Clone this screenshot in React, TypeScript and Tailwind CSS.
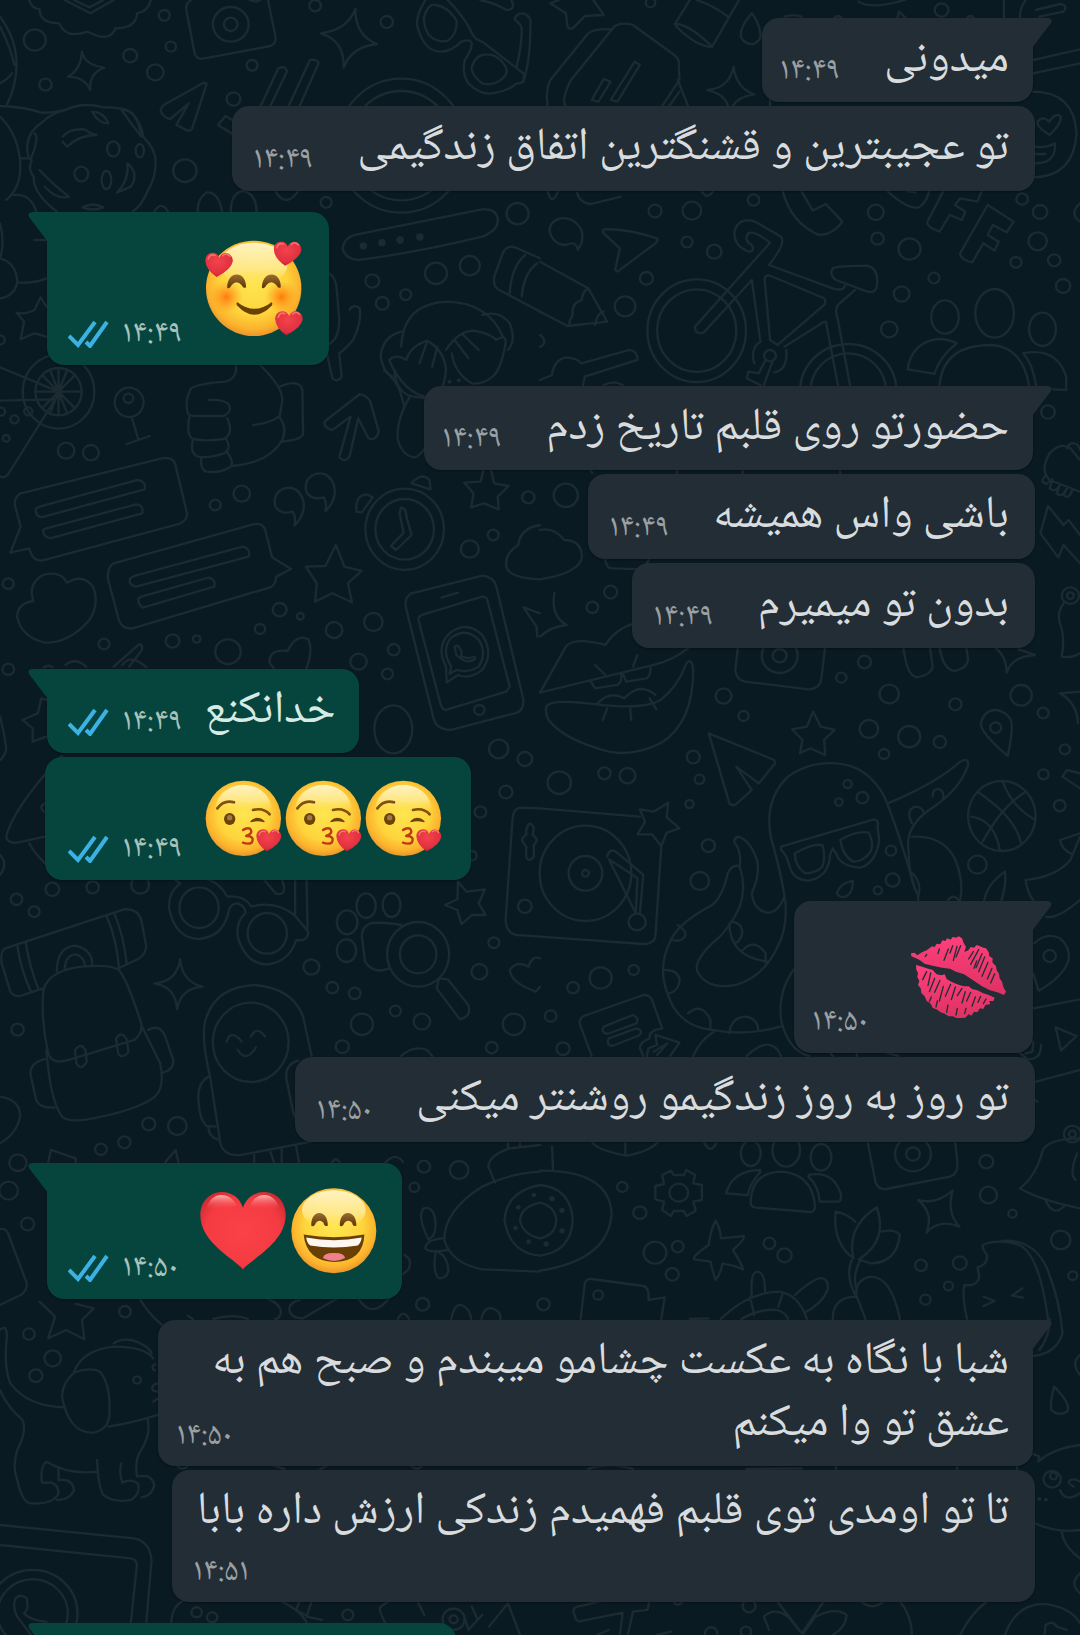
import type { ReactNode } from 'react';
import clsx from 'clsx';

type Circle = [number, number, number];

type Panel = {
  x: number;
  y: number;
  lines: string[];
  circles: Circle[];
  ovals?: [number, number, number, number][];
  dots?: Circle[];
};

type Message = {
  id: number;
  mine: boolean;
  tail: boolean;
  time: string;
  text?: string;
  emoji?: ReactNode;
  emojiClass?: string;
  meta?: 'inline' | 'over' | 'below';
};

// wallpaper drawings, one group per tile
const PANELS: Panel[] = [
  {
    x: 0,
    y: 0,
    lines: [
      'M238 155Q245 195 303 203Q258 220 262 270Q245 230 197 230Q235 210 238 155Z',
      'M1032 26Q1030 105 1095 132Q1020 140 998 203Q1000 120 931 100Q1010 90 1032 26Z',
      'M85 0Q90 25 115 28Q115 70 172 70Q190 118 255 95Q320 130 335 85Q395 85 398 40Q430 35 438 0M188 0L262 40L330 0M215 0L260 22L300 0',
      'M555 0Q538 10 541 30L565 160Q570 178 590 176L785 138Q803 130 800 110L778 0M725 0L745 5L755 0',
      'M0 50Q85 170 20 315M0 80Q30 140 42 195M0 250Q20 240 35 220',
      'M190 330Q240 305 300 322Q350 320 385 340Q415 380 415 410Q455 450 452 490Q450 540 430 570Q410 620 385 635M165 635Q95 580 98 530Q80 510 92 480Q75 470 80 430Q85 390 125 365Q150 340 190 330',
      'M182 410Q200 385 245 388Q260 400 280 405Q230 405 195 440L182 425M268 335Q300 335 315 370Q285 370 268 335M350 325Q400 330 410 410Q380 370 350 325M115 510Q150 550 200 590Q165 600 130 560M370 490Q405 520 380 560L340 578Q375 540 370 490M240 622Q270 605 300 622Q270 635 240 622M100 400Q115 410 92 470',
      'M0 318Q70 320 120 338Q150 340 190 330M0 350Q50 400 58 480Q65 560 18 600M40 585Q90 580 105 635M60 475H90',
      'M600 252Q595 245 585 252L475 315Q462 330 470 340Q480 355 495 357L548 310L512 375L545 392Q555 393 558 385Z',
      'M757 318L808 205Q830 195 833 215L785 318M838 318L900 180Q925 178 925 190L870 318M675 360L655 348L633 375L675 402',
      'M1235 0Q1200 60 1215 90Q1235 155 1280 155Q1310 155 1340 125Q1365 115 1370 130Q1370 150 1350 180Q1340 220 1360 250Q1400 290 1440 278Q1480 270 1500 250Q1525 255 1520 220L1400 125Q1380 120 1370 100Q1355 60 1300 0',
      'M1265 15Q1300 20 1325 60Q1330 100 1300 122Q1270 130 1245 105Q1220 60 1240 30Q1250 10 1265 15M1400 165Q1440 155 1465 195Q1480 215 1460 235Q1430 260 1400 250Q1365 220 1370 200Q1380 170 1400 165',
      'M1395 0Q1440 10 1470 30Q1490 30 1490 15L1485 0M1495 60Q1495 40 1520 40Q1545 50 1540 75Q1540 180 1520 245M1495 60Q1512 70 1515 85Q1515 140 1500 200',
      'M1030 705L1400 628Q1440 625 1445 655Q1450 690 1400 710Q1200 760 1040 780Q1000 775 995 745Q998 715 1030 705',
      'M575 635Q570 600 600 577Q635 575 645 635M670 635Q670 580 705 573Q745 580 745 635M800 575Q830 625 865 575M448 635Q468 600 488 635',
      'M1568 775L1495 742Q1470 735 1460 760L1435 830Q1430 860 1450 870L1568 935M1525 765Q1485 800 1480 880M1560 790Q1520 820 1515 890',
      'M0 670Q15 730 0 775Q50 790 50 850Q40 890 0 895M55 848Q100 850 135 835M135 920L118 892L100 930Q70 945 48 938L70 965L60 1018L100 1000L135 1010M100 720H135',
      'M955 820Q975 830 978 870L985 960Q985 1020 950 1035M1015 930Q1025 910 1045 925Q1050 970 1025 1020Q1000 1050 985 1060L992 1130Q980 1150 965 1135L950 1065',
      'M1165 1040Q1170 910 1300 905Q1420 910 1460 1010M1400 945Q1450 930 1480 970Q1500 1020 1475 1050M1165 995Q1110 1010 1105 1070Q1115 1120 1140 1130',
      'M1130 1080Q1150 1060 1180 1080Q1190 1040 1240 1022Q1290 1050 1295 1110Q1290 1180 1250 1195Q1170 1180 1130 1080M1295 1050Q1340 980 1390 995Q1430 1005 1440 1020Q1470 1000 1468 1030Q1455 1110 1430 1130Q1400 1155 1370 1150Q1320 1120 1312 1060M1240 1025L1218 1090M1270 1040L1255 1100M1320 1020L1360 1075M1345 1005L1390 1050'
    ],
    circles: [
      [101, 120, 32], [477, 46, 16], [378, 167, 20], [496, 140, 15], [451, 217, 24], [132, 254, 18], [732, 196, 16],
      [678, 297, 20], [915, 17, 17], [1123, 66, 18], [537, 512, 34], [947, 607, 16], [1503, 641, 32], [1266, 820, 32],
      [1364, 797, 29], [1081, 843, 20], [1110, 910, 19], [1178, 884, 16], [670, 73, 52], [670, 73, 20], [0, 1020, 14]
    ],
    ovals: [[1165, 437, 187, 201], [1165, 437, 152, 164], [329, 447, 18, 23], [406, 452, 12, 20], [236, 522, 20, 22], [309, 540, 14, 27]],
    dots: [[1055, 738, 11], [1109, 728, 11], [1162, 720, 11], [1219, 711, 11], [1305, 1145, 6], [1332, 1141, 6]]
  },
  {
    x: 540,
    y: 0,
    lines: [
      'M55 0L30 10L75 40L80 80Q90 92 98 82L130 48L185 45L155 0',
      'M435 0L392 72Q400 90 450 125Q490 145 500 140L578 0M392 72Q430 70 500 140M455 0Q510 20 545 50',
      'M615 40Q580 80 583 110Q595 135 620 132Q645 120 640 100Q635 65 615 40',
      'M75 318Q60 300 90 240L215 80Q235 65 270 75L390 165Q408 180 403 200L405 240L355 318M205 88Q160 85 140 100L30 240Q15 270 22 318M400 240L430 318M405 275L375 318M290 195L225 305L205 300L275 185ZM205 245L170 305L150 300L185 237Z',
      'M560 318Q575 290 622 283Q570 265 562 200Q550 265 485 270Q540 285 545 318M668 280V318',
      'M925 5Q960 30 1060 0M1347 0V54M1410 0Q1390 30 1395 54M1450 50L1520 35Q1535 15 1510 12L1440 30M1432 180L1568 148M1432 220L1568 190M710 50Q735 42 760 50M1038 54L1042 35L1062 54M1240 54Q1250 42 1260 54M855 54Q865 42 875 54',
      'M1432 275Q1550 275 1558 400Q1550 530 1432 532M1480 405Q1440 380 1445 365Q1460 345 1478 365Q1500 335 1512 350Q1515 370 1480 405M1437 440Q1470 445 1495 430Q1500 490 1437 490M1437 462H1468',
      'M705 575Q730 670 810 705Q850 705 878 665L830 612L792 632L760 575',
      'M1170 575L1125 665Q1120 680 1160 695L1190 645L1225 660L1235 635L1205 615L1220 595L1270 605L1282 575M1300 615L1220 760Q1220 780 1255 787L1287 730L1320 752L1332 725L1300 705L1315 675L1355 697L1375 665ZM1010 575Q1070 630 1100 622Q1120 610 1130 575M1065 573L1090 577',
      'M110 750Q130 720 120 690Q100 650 60 655Q25 665 28 695Q40 735 75 735Q105 720 110 750',
      'M185 688Q250 685 340 715Q345 722 335 730L225 815L218 810L232 745L182 697Z',
      'M0 785L140 865L195 965L80 978L0 935M140 865Q120 880 122 900Q90 910 95 945Q85 960 85 975M160 975Q165 940 185 935',
      'M668 728Q620 690 605 700Q590 720 615 735Q625 755 605 755Q560 735 565 695Q575 650 625 665L700 710Q715 730 665 795L850 865Q880 875 885 858M668 728L450 980Q450 1005 475 998L615 840L640 1025M652 835Q655 822 670 828L825 895Q832 905 825 915L690 1035L668 1020Z',
      'M850 805Q870 797 950 797Q985 805 978 860Q975 880 950 875L860 840Q838 825 850 805M915 870L865 915Q855 930 865 960L900 1155M830 965L865 1155M830 965Q820 965 810 975L710 1040M640 1025Q610 1045 622 1090M655 1080L635 1120L605 1115L600 1135L640 1155M675 1085L650 1155M715 1050Q720 1110 680 1117',
      'M1160 1155Q1170 1035 1310 1035Q1400 1040 1420 1155M1210 1030Q1150 1000 1100 1040Q1070 1070 1068 1108L1145 1122Q1160 1070 1210 1030M1403 1060Q1500 1040 1528 1130V1170L1490 1168M1403 1060Q1430 1090 1440 1155',
      'M35 1125Q40 1080 75 1072Q110 1075 120 1090L260 1050Q285 1055 283 1080L130 1130L125 1155M0 1140L35 1125M185 1155Q215 1140 240 1155M0 1005Q15 1015 12 1030Q5 1040 0 1040',
      'M108 578Q115 610 150 612L235 590M22 575Q35 620 52 575M470 575Q485 600 502 575M1568 610Q1535 640 1568 665'
    ],
    circles: [
      [321, 8, 14], [1166, 30, 20], [334, 633, 19], [441, 632, 27], [620, 600, 17], [427, 726, 16], [506, 755, 21],
      [309, 835, 19], [247, 919, 30], [975, 637, 23], [980, 716, 18], [1073, 747, 32], [1400, 597, 17], [1452, 636, 21],
      [1445, 724, 27], [1382, 787, 16], [1493, 781, 18], [1519, 858, 21], [1144, 834, 16], [1050, 882, 23],
      [1014, 988, 24], [668, 1067, 17]
    ],
    ovals: [[455, 992, 143, 154], [455, 992, 115, 124], [895, 1175, 140, 143], [895, 1175, 110, 115], [1176, 951, 40, 50], [1320, 940, 56, 73], [1459, 988, 39, 50]]
  },
  {
    x: 0,
    y: 370,
    lines: [
      'M0 -8L170 65M0 92L160 88L22 315Q12 325 0 320M170 -3V133M102 65H238M122 15L218 115M218 15L122 115M145 0L195 130M195 0L145 130',
      'M382 140L402 210M368 222L435 198M685 -15Q690 25 655 35Q580 40 555 55Q535 90 545 130Q550 140 580 138L650 138Q675 125 665 105Q655 88 605 90',
      'M550 140Q540 195 560 207Q600 215 650 207Q680 190 660 145M560 210Q550 250 575 260Q610 265 650 250Q675 235 655 205M585 262Q580 300 600 305Q640 310 670 290Q680 275 660 248M672 288Q780 280 820 210Q835 170 810 140Q780 160 735 165M755 -15Q820 50 820 90L812 140M812 50Q870 25 878 60L880 190Q880 210 815 215',
      'M1045 72Q1070 80 1075 95L1100 185Q1090 215 1070 205L1040 145L1015 260Q1000 280 985 262L1018 140L965 180Q940 175 942 155Z',
      'M1190 80Q1150 150 1155 210Q1170 260 1205 262Q1235 250 1243 200M1145 0Q1150 70 1200 80L1243 85M1115 0Q1150 30 1160 60L1175 110',
      'M60 370L470 265Q500 260 508 280L543 430Q545 450 520 462L130 570Q95 580 85 535L30 548L60 470L43 405Q42 380 60 370M115 410L400 330Q425 335 420 358L120 442Q100 435 105 415ZM135 475L395 403Q418 405 413 430L145 505Q125 500 125 480Z',
      'M330 580L740 462Q765 460 770 480L790 562L845 597L802 620Q800 645 785 652L385 775Q355 780 345 750L313 625Q312 590 330 580M390 618L705 530Q728 535 722 560L395 650Q372 645 378 625ZM410 680L605 623Q628 628 622 650L415 713Q400 705 402 685Z',
      'M855 467Q890 430 880 390Q865 345 825 355Q790 370 800 410Q815 435 850 425Q860 440 855 467M945 424Q980 387 970 347Q955 302 915 312Q880 327 890 367Q905 392 940 382Q950 397 945 424',
      'M1035 425Q1030 375 1065 373L1082 382L1050 428ZM1195 340Q1225 305 1247 330L1250 358ZM1165 412Q1180 415 1180 440L1195 495L1150 540L1135 528L1172 488L1160 430Z',
      'M975 525L1000 590L1050 603L1010 640L1022 697L965 670L915 695L920 640L888 590L945 588ZM1425 297L1435 340L1477 348L1445 380L1448 418L1405 400L1368 412L1375 370L1348 338L1395 335L1405 297',
      'M1568 465Q1510 475 1505 525Q1465 550 1470 590Q1480 625 1568 628',
      'M97 693Q80 640 125 615Q175 600 195 638Q240 610 270 650Q290 700 260 750Q200 820 130 818Q60 800 50 740Q50 700 97 693',
      'M1195 670L1400 617Q1430 620 1440 645L1520 990Q1520 1025 1495 1030L1310 1080Q1270 1080 1260 1050L1178 710Q1175 680 1195 670M1225 735L1400 680Q1413 680 1415 690L1480 950L1470 965L1295 1020Q1285 1020 1280 1005L1215 750Q1213 740 1225 735M1282 683L1330 668',
      'M1297 937L1295 890Q1265 830 1305 790Q1355 750 1400 795Q1435 850 1400 900Q1365 930 1330 915ZM1305 912L1310 890Q1280 840 1310 803Q1355 770 1390 810Q1415 850 1390 890Q1360 910 1325 900ZM1320 830Q1330 820 1340 845L1340 860L1362 865Q1385 855 1378 868Q1355 885 1325 855Z',
      'M890 894Q910 840 895 808Q860 790 835 843Q780 835 783 880L795 894M330 890L405 822Q415 825 412 840L375 890M355 885Q380 850 425 892M190 885Q220 860 250 890M128 892Q140 882 152 892',
      'M135 990L120 985L110 1030L65 1050L95 1075L95 1115L135 1100M1568 730L1520 712L1558 770L1560 800M0 1040Q15 1100 18 1140Q10 1165 0 1170'
    ],
    circles: [
      [82, 124, 12], [42, 148, 12], [18, 205, 10], [3, 125, 12], [373, 85, 14], [192, 242, 24],
      [264, 248, 23], [625, 405, 16], [702, 371, 24], [24, 641, 16], [302, 822, 16], [501, 813, 20], [571, 807, 11],
      [662, 845, 37], [755, 777, 15], [812, 719, 20], [872, 739, 10], [970, 780, 24], [1084, 756, 27], [1041, 875, 24],
      [1143, 839, 17], [1125, 912, 16], [24, 898, 17], [1432, 495, 16], [1364, 537, 26], [1534, 382, 18], [1392, 1020, 15]
    ],
    ovals: [[170, 65, 67, 71], [170, 65, 104, 111], [375, 97, 42, 44], [1175, 478, 114, 122], [1175, 478, 85, 91], [1142, 1078, 55, 72]]
  },
  {
    x: 540,
    y: 370,
    lines: [
      'M0 480Q40 470 70 510Q120 510 122 560Q115 610 0 628M42 668Q30 740 78 765Q30 770 0 800',
      'M275 760Q220 775 190 825Q100 800 75 830L0 968L330 885Q390 870 435 830',
      'M18 1010Q30 985 165 1003Q300 1020 350 990Q400 950 425 880Q440 860 445 900Q445 1060 350 1120Q270 1160 200 1145Q70 1110 25 1050Q15 1030 18 1010',
      'M148 935L160 955L225 945Q240 935 235 910M240 910L250 935L310 925Q325 910 320 890M165 1003Q200 960 245 985Q290 935 335 975M160 885L190 915M283 855L270 890M195 1015L182 1050M262 1015L265 1050M318 985L338 1018',
      'M575 831L567 900Q570 930 595 935L780 958Q815 955 817 925L828 831',
      'M1055 831Q1065 920 1095 922Q1135 915 1140 890L1132 831M1160 831Q1170 900 1205 903Q1240 895 1243 870L1238 831',
      'M1320 831Q1355 860 1355 908Q1370 860 1437 855L1390 838',
      'M1568 270L1540 235Q1510 215 1480 250Q1450 300 1480 330L1568 365M1530 235Q1540 210 1562 225L1568 240M1470 315Q1448 335 1470 342L1488 328L1480 355Q1495 370 1510 345L1500 370Q1515 385 1530 355L1520 375Q1535 390 1545 362',
      'M1568 580L1520 525L1505 562L1453 490L1475 408L1520 465L1535 450L1568 495M1520 700Q1500 730 1510 760Q1525 800 1515 860Q1545 865 1568 850M1568 965L1510 970Q1560 1000 1562 1060',
      'M793 1025L815 1070L855 1080L825 1110L828 1155L785 1135L755 1150L762 1110L732 1078L775 1070Z',
      'M1358 1158Q1280 1090 1280 1060Q1290 1020 1325 1020Q1370 1030 1370 1070Q1370 1100 1358 1158',
      'M190 566Q190 595 210 595L300 598L318 566M145 297L152 309M398 297V309M588 297V309M870 297L872 309'
    ],
    circles: [
      [205, 666, 19], [152, 712, 17], [942, 876, 19], [875, 923, 15], [533, 978, 23], [591, 1038, 15], [1014, 972, 28],
      [1206, 1003, 18], [1397, 976, 31], [1461, 1029, 16], [955, 1077, 27], [1072, 1100, 32], [1161, 1116, 18],
      [1323, 1073, 16], [1475, 126, 20], [696, 857, 20], [696, 857, 52], [1540, 677, 25], [1540, 677, 10], [75, 376, 35]
    ]
  },
  {
    x: 0,
    y: 740,
    lines: [
      'M600 417Q640 430 660 470Q710 465 730 500Q800 480 855 525L895 575Q895 605 860 600Q840 665 778 673Q715 675 690 590Q685 545 712 520Q715 500 690 490Q670 490 665 510Q650 590 578 597Q510 595 492 510Q485 460 523 430L505 417M890 417L893 565M857 417V530M765 417L800 460Q825 470 825 440L818 417',
      'M340 687L395 660Q420 650 425 620L410 540Q400 505 360 508L15 625Q0 635 5 670L30 755Q40 770 60 768L125 745M50 615Q60 690 90 755M75 608Q85 680 112 748M308 525Q340 600 345 682M332 520Q360 590 368 672M165 695Q165 620 220 617Q270 630 268 678M188 688Q190 645 220 643Q245 650 247 678',
      'M125 760Q130 700 220 682Q320 670 345 690Q370 720 410 850Q415 880 390 900L200 960Q150 975 140 940Q120 850 125 760M135 930Q145 1080 180 1130Q200 1150 270 1135Q400 1110 450 1070Q480 1040 465 970L410 855M430 870Q465 850 480 890L503 960Q505 990 472 998M135 957Q90 965 88 1000L105 1080Q115 1105 158 1103M218 930Q235 905 248 930L252 965Q235 995 222 970ZM337 895Q355 870 368 900L373 935Q355 960 343 940Z',
      'M523 657Q528 725 588 740Q525 745 514 808Q510 740 448 731Q515 725 523 657',
      'M905 948L880 830Q850 745 740 735Q630 740 600 830Q580 880 610 1010L640 1210Q650 1250 700 1245L915 1203M605 1010Q570 1030 577 1090Q580 1140 600 1158L625 1160M605 1160Q605 1190 635 1200M865 962Q825 975 832 1020L850 1110Q855 1135 863 1138M658 905Q670 865 702 905M728 890Q745 855 770 890M690 930Q715 970 743 922M738 1245V1266M785 1235L795 1266M818 1228V1266M860 1220L868 1266',
      'M1165 555Q1110 545 1075 550Q1045 565 1052 600L1060 665Q1085 705 1130 685M1275 715L1300 718L1360 795Q1370 830 1335 838L1268 745Z',
      'M1330 425L1355 455L1408 448L1390 490L1410 525L1370 525L1340 553L1328 510L1292 495L1328 478Z',
      'M1568 205L1510 203Q1490 205 1488 240L1468 540Q1470 580 1500 585L1568 590M1528 270Q1538 235 1550 265L1547 285Q1568 300 1550 315L1550 350Q1535 370 1528 350V320Q1505 295 1528 285Z',
      'M1568 655Q1545 645 1535 680Q1500 660 1480 690Q1485 730 1555 755L1568 740',
      'M180 47Q40 200 18 290Q20 310 50 308L131 290M85 310Q100 340 131 370M0 1070Q60 1080 58 1130Q50 1180 0 1210M0 345Q25 370 0 405M131 190Q110 200 128 215',
      'M140 1266L148 1230L220 1255V1266M480 1266L510 1230L518 1266M1165 948Q1200 915 1240 930L1255 948M1475 1203V1228M1510 1203V1220M1120 1266Q1150 1235 1170 1266M965 1266Q975 1250 985 1266'
    ],
    circles: [
      [1448, 27, 28], [1524, 57, 21], [1469, 156, 19], [1395, 216, 17], [1370, 347, 14], [48, 478, 17], [99, 515, 16],
      [152, 448, 20], [269, 442, 18], [407, 435, 26], [904, 681, 23], [965, 743, 17], [1030, 760, 17], [1148, 813, 16],
      [1225, 845, 24], [1051, 853, 32], [994, 920, 19], [1434, 608, 16], [1392, 695, 23], [1492, 853, 32], [1428, 923, 17],
      [51, 869, 18], [515, 1158, 27], [432, 1152, 19], [361, 1207, 18], [293, 1228, 17], [1524, 499, 20]
    ],
    ovals: [[578, 503, 57, 61], [776, 580, 57, 61], [1214, 643, 53, 57], [1214, 643, 90, 97], [728, 907, 110, 119], [1008, 547, 30, 36], [1063, 497, 28, 37], [1137, 495, 26, 36], [1006, 632, 28, 34]]
  },
  {
    x: 540,
    y: 740,
    lines: [
      'M490 -20L550 190Q560 200 570 192L615 150L570 80L635 130L683 70L680 60L490 -20',
      'M1252 230Q1320 240 1335 330M1345 128Q1370 200 1438 240M1285 305Q1340 200 1410 155M1270 155Q1380 230 1397 310',
      'M0 205L290 230M352 320L335 590Q330 612 300 612L0 590M372 188L368 232L405 265L368 278L352 318L325 283L283 283L305 245L290 208L330 215ZM195 350Q200 325 220 335L255 365L300 405L290 520M278 520L283 415L240 385L200 358Z',
      'M710 470Q700 400 670 290Q650 180 720 110Q780 65 860 70Q950 75 1000 170Q1040 270 1090 450Q1100 465 1098 480',
      'M700 320L970 238Q985 240 980 260L985 300Q975 370 930 383Q870 380 860 340L850 325L842 345Q840 410 780 422Q735 420 725 380Q715 340 700 330ZM740 340Q790 310 820 315Q830 350 820 380Q800 400 770 400Q740 380 740 340M872 300Q920 270 955 278Q970 310 960 335Q940 365 910 365Q880 350 872 300M908 422Q870 430 862 460Q875 480 895 465Q910 450 908 422',
      'M710 470Q690 520 660 518Q620 510 615 460Q640 400 630 360Q610 300 575 290Q555 300 570 315Q585 340 580 380Q560 370 545 400Q530 470 500 495Q400 550 380 600Q340 680 370 760Q400 860 500 870Q600 890 705 858M580 380Q600 440 580 500Q550 570 500 610Q440 670 460 700Q490 750 570 735Q650 710 690 620Q720 560 712 480',
      'M400 555Q430 575 420 590Q405 610 380 597M362 690Q405 690 405 725Q400 755 375 760M430 820Q470 785 495 840V865M550 880Q555 830 600 830Q635 840 633 870M555 545Q590 550 587 580Q580 610 565 608M585 635Q620 590 655 640V668M550 550Q550 650 660 665',
      'M1010 190Q1150 130 1220 65Q1245 50 1243 75Q1220 150 1130 210Q1060 260 1070 330Q1070 400 1090 450M1140 170Q1140 140 1165 150Q1175 165 1170 178M1080 250Q1060 210 1090 200Q1110 200 1115 220M1080 290Q1180 285 1210 370Q1230 430 1220 480M1290 480Q1300 430 1350 395Q1355 430 1340 480M1082 400Q1110 430 1098 470M1185 480Q1200 460 1215 480',
      'M740 685Q690 750 700 840Q720 930 780 948M505 875Q465 900 445 948M600 948Q670 880 700 948M840 936L850 948M920 936V948M1000 936L1040 948',
      'M1568 290L1540 360Q1500 410 1410 420Q1415 460 1432 480M1568 280L1510 300Q1515 330 1545 342M1470 530Q1500 540 1568 480M1568 100L1530 90L1517 110L1568 145',
      'M1435 610Q1470 575 1510 595Q1540 620 1535 660Q1520 710 1448 752L1432 700',
      'M150 948L115 850Q115 830 135 825L300 765Q320 765 325 780L355 865Q315 870 318 895Q290 905 290 925L300 948M185 860L270 825Q290 835 280 850L195 882Q175 875 185 860M200 895L280 865Q300 870 290 885L210 918Q190 915 200 895M310 948L315 925L340 915L335 885L405 908L378 948M330 935L370 910L340 945',
      'M1432 805L1568 778M1440 1025L1568 990M1497 862L1558 888L1513 932ZM1455 915Q1455 960 1415 958L1390 936M1432 905L1430 935L1410 940M1437 1080L1445 1085',
      'M150 1203Q160 1230 250 1247Q320 1235 345 1203M248 1203V1245M475 1203Q495 1250 515 1203'
    ],
    circles: [
      [445, 51, 19], [463, 118, 14], [434, 192, 12], [187, 100, 18], [254, 107, 23], [56, 128, 34], [999, 42, 15],
      [1524, 28, 15], [1462, 103, 15], [1509, 197, 17], [893, 132, 12], [936, 173, 17], [868, 186, 11], [1019, 332, 15],
      [1024, 420, 20], [981, 451, 12], [489, 317, 19], [464, 423, 27], [1270, 374, 27], [132, 400, 10], [282, 546, 25],
      [176, 714, 32], [272, 690, 15], [96, 743, 17], [31, 828, 17], [67, 926, 19], [1480, 648, 18], [1546, 1182, 25],
      [1546, 1182, 10]
    ],
    ovals: [[132, 400, 133, 143], [132, 400, 49, 52], [1341, 228, 98, 105]]
  },
  {
    x: 0,
    y: 1150,
    lines: [
      'M115 455L160 500L140 565L192 540L245 568L238 510L272 475L220 462',
      'M0 237Q20 235 25 255L78 400Q78 425 60 435L0 465',
      'M405 445Q430 490 470 525M775 445Q820 465 815 490Q810 507 800 507M980 445L880 505Q840 505 840 475Q845 455 870 450M1040 445Q1080 510 1130 445M1310 507Q1320 460 1340 465Q1365 475 1368 507M1398 507Q1405 470 1430 475Q1455 485 1453 507M1155 507Q1170 475 1188 507M620 507Q680 490 720 507M545 497L560 507M510 942Q530 970 550 942M1190 942Q1210 970 1230 942M780 942L825 957M930 957L960 942',
      'M0 540Q20 520 20 560Q10 650 30 700Q80 770 190 772M215 665Q240 600 330 590Q420 590 445 625M330 580Q350 565 380 570Q430 585 440 610M215 668Q180 700 180 740Q200 850 270 848Q320 840 318 780Q320 700 290 665Q265 650 215 668M315 830Q380 820 459 795M450 643Q435 652 450 662M459 700Q435 705 445 722L459 725M445 755L459 745',
      'M0 720Q20 770 65 810Q80 840 50 900Q35 950 50 990Q65 1060 90 1060Q150 1065 168 1035Q175 1010 150 998L122 998Q115 950 135 935Q200 975 282 965M282 930Q285 1010 300 1035Q330 1060 380 1050Q410 1030 400 1000Q380 985 355 998Q345 970 352 940M428 805Q440 850 410 900Q390 930 398 980Q440 970 448 1005Q440 1040 410 1042M170 955V990Q210 985 215 1020Q205 1050 165 1050',
      'M0 1125L390 1165Q435 1175 440 1230L425 1416M0 1185L380 1225Q400 1230 397 1250L380 1416M45 1345Q60 1330 78 1345L80 1375L70 1390Q85 1410 135 1416M45 1345Q35 1370 50 1400L90 1455',
      'M497 1416Q500 1370 530 1353M815 1353Q870 1380 890 1416M870 1353L860 1380L895 1400M905 1353L890 1400L935 1410M1130 1353L1105 1370Q1095 1380 1130 1440M1215 1360L1232 1395M1370 1370L1385 1405M1510 1455L1475 1360L1420 1430M1350 1405L1360 1440L1400 1395',
      'M1568 65Q1480 70 1400 110Q1290 180 1290 270Q1310 340 1400 358L1568 365M1285 265Q1235 270 1235 295Q1245 310 1300 300M1245 270Q1210 200 1230 175Q1260 165 1265 220Q1265 255 1250 265M1265 305Q1255 370 1275 385Q1300 385 1302 360Q1300 320 1270 305M1437 98L1418 50Q1420 15 1480 -5L1568 -15',
      'M1568 105Q1470 125 1465 210Q1480 310 1568 317M1568 158Q1512 170 1510 212Q1520 255 1568 265M1175 315Q1200 330 1185 360L1171 372'
    ],
    circles: [
      [52, 38, 25], [25, 122, 27], [80, 222, 19], [363, 485, 17], [84, 552, 17], [153, 625, 24], [104, 677, 19],
      [398, 690, 11], [1231, 50, 18], [1333, 60, 27], [1203, 112, 14], [1227, 463, 19], [571, 1387, 15], [616, 1402, 15],
      [1010, 1395, 16], [1317, 1408, 12], [1317, 1408, 32], [95, 1390, 130], [95, 1390, 102]
    ],
    dots: [[1550, 135, 7], [1505, 172, 7], [1497, 234, 7], [1535, 275, 7]]
  },
  {
    x: 540,
    y: 1150,
    lines: [
      'M0 62Q200 60 208 190Q200 330 0 362M0 105Q90 115 95 210Q90 305 0 317M0 158Q45 170 47 212Q45 255 0 265M38 60L35 -10',
      'M380 62L388 75L418 75L425 60L450 75L445 100L470 105V150L445 155L452 182L425 198L418 183L388 183L380 198L355 180L360 155L335 148V108L360 102L355 75Z',
      'M612 155Q615 65 705 65Q790 75 798 165Q800 185 785 186L625 173Q610 170 612 155M640 60Q560 60 540 130L603 135Q610 100 640 65M780 75Q850 60 873 130Q877 155 865 155L812 155Q810 110 780 80',
      'M950 -30L975 100Q985 120 1005 117L1190 80Q1215 70 1212 40L1205 -30',
      'M510 212Q525 240 525 265L592 258Q595 270 560 300Q580 330 590 358Q560 345 530 340Q525 370 510 390Q500 360 495 335L448 328Q440 320 490 285Q495 240 510 212',
      'M910 325Q850 280 858 185Q890 190 915 215M910 325Q890 230 978 172Q1010 270 930 325M990 245Q1030 235 1045 255Q1035 340 960 340L925 328M905 330Q885 380 920 445M930 330Q905 380 920 420M920 445Q910 390 960 380Q1020 380 1045 507M920 440Q850 440 850 507M920 440L945 507',
      'M1198 122Q1180 190 1218 230Q1160 205 1122 248Q1145 190 1098 150Q1150 165 1198 122',
      'M1568 -35Q1480 -35 1460 0Q1440 80 1393 115Q1450 150 1568 175M1468 150Q1490 205 1525 165M1560 10Q1535 70 1555 90',
      'M1240 507Q1225 440 1232 405Q1265 410 1275 385Q1275 370 1270 352Q1300 345 1298 315Q1285 300 1285 285Q1330 265 1390 285Q1450 310 1475 507M1340 273Q1430 265 1470 350Q1510 450 1517 550Q1500 610 1432 618M1480 507Q1480 560 1450 600M1288 440L1320 453L1288 468M1400 415L1370 437L1403 443',
      'M118 507L130 400Q135 385 150 387L300 408Q318 412 315 450L362 442L352 507M435 507L490 505',
      'M525 507Q600 430 690 425Q750 430 775 507M610 440L622 495M705 430L692 470M585 507Q640 475 690 480Q715 490 720 507M615 435Q610 365 632 365Q655 370 653 425M740 435Q800 380 820 385Q840 390 835 420Q820 460 770 487',
      'M1493 710Q1480 760 1485 780Q1505 800 1530 785Q1545 765 1493 710M1568 615Q1540 640 1568 675',
      'M1568 885Q1490 895 1447 935L1450 920L1432 912M1437 1120Q1500 1150 1568 1140M1515 1145Q1520 1190 1568 1225M1550 1010Q1528 1000 1540 990Q1555 985 1568 995M1510 1020Q1525 1060 1568 1030M1568 1270Q1535 1300 1568 1330M1385 942V957M1208 942L1212 957M855 942L860 957M140 957Q200 935 270 957M600 957L760 955',
      'M180 1353L120 1368Q95 1370 97 1385L105 1410Q115 1418 125 1412L240 1388L232 1455M318 1353L312 1380L270 1385L255 1455M165 1455L200 1440M340 1455L380 1445',
      'M688 1353L760 1450L825 1353M665 1440L650 1400Q680 1370 720 1400L760 1450M765 1450L800 1400Q860 1370 890 1395Q890 1430 850 1455M1045 1353Q1080 1400 1080 1455M1300 1353Q1250 1390 1220 1455M1350 1455Q1380 1365 1460 1362Q1540 1370 1568 1420M1465 1455L1468 1425Q1490 1410 1500 1430L1530 1440M930 1353Q965 1385 1000 1353M385 1353Q400 1375 415 1353'
    ],
    circles: [
      [403, 128, 27], [239, 111, 15], [290, 188, 19], [334, 308, 33], [400, 290, 17], [384, 373, 19], [666, 280, 17],
      [710, 316, 21], [1296, 35, 20], [1302, 135, 25], [1372, 191, 12], [1512, 270, 28], [1106, 346, 17], [1219, 339, 20],
      [1186, 408, 13], [1119, 449, 15], [1547, 377, 13], [169, 435, 14], [10, 463, 18], [607, 1368, 19], [497, 1450, 18],
      [598, 1445, 15], [1487, 988, 25], [1491, 978, 10], [1083, 12, 52], [1083, 12, 20]
    ],
    ovals: [[612, 10, 29, 38], [715, 0, 40, 50], [816, 22, 30, 40]],
    dots: [[35, 146, 8], [64, 181, 8], [64, 242, 8], [18, 282, 8], [1450, 1047, 6], [1469, 1049, 6]]
  }
];

const Wallpaper = () => (
  <svg
    className="absolute inset-0 h-full w-full"
    viewBox="0 0 1080 1635"
    preserveAspectRatio="xMidYMin slice"
    fill="none"
    stroke="#1c2a32"
    strokeWidth="7"
    strokeLinejoin="round"
    strokeLinecap="round"
    aria-hidden="true"
  >
    {PANELS.map((panel) => (
      <g key={`${panel.x}-${panel.y}`} transform={`translate(${panel.x} ${panel.y}) scale(0.3444 0.3333)`}>
        {panel.lines.map((d) => (
          <path key={d} d={d} />
        ))}
        {panel.circles.map(([x, y, r], i) => (
          <circle key={i} cx={x} cy={y} r={r} />
        ))}
        {panel.ovals?.map(([x, y, rx, ry], i) => (
          <ellipse key={i} cx={x} cy={y} rx={rx} ry={ry} />
        ))}
        {panel.dots?.map(([x, y, r], i) => (
          <circle key={i} cx={x} cy={y} r={r} fill="#1c2a32" stroke="none" />
        ))}
      </g>
    ))}
  </svg>
);

const EmojiDefs = () => (
  <svg className="absolute h-0 w-0" aria-hidden="true">
    <defs>
      <radialGradient id="face" cx="0.5" cy="0.44" r="0.57">
        <stop offset="0" stopColor="#ffe550" />
        <stop offset="0.6" stopColor="#fdd53c" />
        <stop offset="0.85" stopColor="#fcb32d" />
        <stop offset="1" stopColor="#e8922a" />
      </radialGradient>
      <linearGradient id="shine" x1="0" y1="0" x2="0" y2="1">
        <stop offset="0" stopColor="#fff3c4" />
        <stop offset="0.6" stopColor="#ffeb96" stopOpacity="0.8" />
        <stop offset="1" stopColor="#ffe45c" stopOpacity="0" />
      </linearGradient>
      <radialGradient id="blush">
        <stop offset="0" stopColor="#ff7a0e" />
        <stop offset="1" stopColor="#ff9a1f" stopOpacity="0" />
      </radialGradient>
      <radialGradient id="smallHeart" cx="0.45" cy="0.35" r="0.7">
        <stop offset="0" stopColor="#f2444c" />
        <stop offset="0.7" stopColor="#e2303f" />
        <stop offset="1" stopColor="#b81c30" />
      </radialGradient>
      <radialGradient id="bigHeart" cx="0.5" cy="0.5" r="0.62">
        <stop offset="0" stopColor="#fb4247" />
        <stop offset="0.7" stopColor="#f43b42" />
        <stop offset="1" stopColor="#c9272f" />
      </radialGradient>
      <linearGradient id="heartShine" x1="0" y1="0" x2="0" y2="1">
        <stop offset="0" stopColor="#ffb9b2" />
        <stop offset="1" stopColor="#fb4247" stopOpacity="0" />
      </linearGradient>
      <linearGradient id="lips" x1="0" y1="0" x2="0" y2="1">
        <stop offset="0" stopColor="#ff3f7c" />
        <stop offset="1" stopColor="#dd3263" />
      </linearGradient>
      <linearGradient id="eye" x1="0" y1="0" x2="0" y2="1">
        <stop offset="0" stopColor="#9a6b35" />
        <stop offset="1" stopColor="#5d3600" />
      </linearGradient>
      <g id="heart">
        <path
          d="M-8 41Q-41 18 -42 -8C-43 -34 -8 -42 0 -17C10 -42 42 -32 41 -7Q38 16 -8 41Z"
          fill="url(#smallHeart)"
        />
        <path d="M-33 -14Q-28 -30 -13 -25M11 -24Q22 -34 32 -22" stroke="#ff8f88" strokeWidth="5" strokeLinecap="round" fill="none" opacity="0.7" />
      </g>
    </defs>
  </svg>
);

const AdoringFace = () => (
  <svg className="size-[100px]" viewBox="38 38 302 302" role="img" aria-label="🥰">
    <circle cx="188" cy="190" r="144" fill="url(#face)" />
    <ellipse cx="188" cy="118" rx="102" ry="66" fill="url(#shine)" />
    <circle cx="105" cy="216" r="50" fill="url(#blush)" />
    <circle cx="272" cy="216" r="50" fill="url(#blush)" />
    <path d="M108 188C108 135 166 135 165 187Q157 192 152 181Q136 162 121 181Q116 194 108 188Z" fill="url(#eye)" />
    <path d="M213 188C213 135 271 135 270 187Q262 192 257 181Q241 162 226 181Q221 194 213 188Z" fill="url(#eye)" />
    <path d="M139 232Q190 272 242 232Q246 234 243 242Q190 298 138 242Q134 234 139 232Z" fill="#6b4003" />
    <use href="#heart" x="84" y="115" />
    <use href="#heart" x="291" y="81" />
    <use href="#heart" x="295" y="291" />
  </svg>
);

const KissFace = () => (
  <svg className="size-20" viewBox="22 22 240 240" role="img" aria-label="😘">
    <circle cx="140" cy="143" r="113" fill="url(#face)" />
    <path d="M56 112C70 20 210 20 225 112Q140 128 56 112Z" fill="url(#shine)" />
    <path d="M62 113Q82 86 112 95" stroke="#80500c" strokeWidth="8" strokeLinecap="round" fill="none" />
    <path d="M169 118Q200 110 219 131" stroke="#80500c" strokeWidth="8" strokeLinecap="round" fill="none" />
    <ellipse cx="99" cy="145" rx="17" ry="18" fill="#6b4208" />
    <circle cx="99" cy="141" r="8" fill="#a07a48" />
    <path d="M162 153Q182 134 203 153Q182 147 162 153Z" fill="#6b4208" stroke="#6b4208" strokeWidth="4" />
    <path
      d="M139 178Q150 170 160 174Q172 188 148 196Q176 196 165 216Q155 222 139 216"
      stroke="#c23a12"
      strokeWidth="7"
      strokeLinecap="round"
      strokeLinejoin="round"
      fill="none"
    />
    <use href="#heart" transform="translate(217 205) scale(0.9)" />
  </svg>
);

const GrinFace = () => (
  <svg className="h-[86px] w-[86px]" viewBox="304 21 259 259" role="img" aria-label="😄">
    <circle cx="433" cy="150" r="128" fill="url(#face)" />
    <ellipse cx="433" cy="88" rx="96" ry="60" fill="url(#shine)" />
    <path d="M365 135C363 84 415 84 415 134Q405 140 402 126Q390 113 379 126Q374 140 365 135Z" fill="url(#eye)" />
    <path d="M451 135C449 84 501 84 501 134Q491 140 488 126Q476 113 465 126Q460 140 451 135Z" fill="url(#eye)" />
    <path d="M342 161Q433 177 525 161Q522 243 433 244Q350 240 342 161Z" fill="#6a3f03" />
    <path d="M350 170Q433 186 517 170Q515 186 505 194Q433 206 362 194Q351 186 350 170Z" fill="#fdf7ef" />
    <path d="M400 232Q404 216 433 217Q464 216 467 232Q433 250 400 232Z" fill="#f0818c" />
  </svg>
);

const RedHeart = () => (
  <svg className="h-[86px] w-[86px]" viewBox="31 21 260 259" role="img" aria-label="❤️">
    <path
      d="M161 267C140 238 33 188 32 104C32 20 137 8 161 80C186 8 290 20 290 104C289 188 182 238 161 267Z"
      fill="url(#bigHeart)"
    />
    <path d="M50 84C62 30 122 28 142 74Q95 92 50 84ZM182 74C200 28 258 30 272 84Q228 92 182 74Z" fill="url(#heartShine)" />
  </svg>
);

const KissMark = () => (
  <svg className="size-[100px]" viewBox="24 18 300 300" role="img" aria-label="💋">
    <path
      d="M33 97L44 95L52 103L66 94L80 88L96 76L104 78L110 68L121 70L127 58L137 60L141 52L152 56L158 48L170 50L176 46L186 52L191 66L198 78L193 93L205 88L212 78L222 80L230 72L240 76L250 80L258 82L266 94L268 106L278 112L277 124L288 136L290 148L297 158L299 172L306 182L310 198L318 212L312 222L292 214L270 208L246 196L226 182L208 170L192 160L168 152L150 143L126 140L98 134L74 128L60 118L48 112L34 106Z"
      fill="url(#lips)"
    />
    <path
      d="M48 132L62 136L80 142L98 147L110 160L124 163L134 160L140 174L150 180L162 186L178 192L192 196L206 196L216 204L232 208L248 216L266 222L284 230L280 240L268 240L270 250L256 252L250 264L240 262L232 274L222 272L214 284L206 280L196 290L182 291L170 291L158 286L146 286L134 278L122 274L112 266L98 260L92 248L80 240L74 226L64 216L62 202L54 192L58 180L52 168L54 156L49 146Z"
      fill="url(#lips)"
    />
    <path
      d="M145 84L132 118M158 74L150 96M171 76L160 118M182 74L168 108M118 84L114 98M80 100L76 106M220 92L206 114M236 86L212 130M246 98L228 140M254 108L236 152M264 124L246 166M276 142L262 174M284 158L272 186M230 120L222 142M80 152L68 176M92 156L84 194M104 172L88 212M120 178L104 214M130 196L118 240M152 190L136 226M166 198L154 236M186 202L172 224M196 212L186 246M212 214L200 240M226 228L216 256M242 226L234 244M258 234L250 248M94 228L88 242M112 240L108 258M144 252L140 274M172 262L168 282M198 262L194 278"
      stroke="#222d35"
      strokeWidth="4"
      strokeLinecap="round"
    />
  </svg>
);

const MESSAGES: Message[] = [
  { id: 1, mine: false, tail: true, time: '۱۴:۴۹', text: 'میدونی' },
  { id: 2, mine: false, tail: false, time: '۱۴:۴۹', text: 'تو عجیبترین و قشنگترین اتفاق زندگیمی' },
  { id: 3, mine: true, tail: true, time: '۱۴:۴۹', emoji: <AdoringFace />, emojiClass: 'pt-[26px] pb-[27px]' },
  { id: 4, mine: false, tail: true, time: '۱۴:۴۹', text: 'حضورتو روی قلبم تاریخ زدم' },
  { id: 5, mine: false, tail: false, time: '۱۴:۴۹', text: 'باشی واس همیشه' },
  { id: 6, mine: false, tail: false, time: '۱۴:۴۹', text: 'بدون تو میمیرم' },
  { id: 7, mine: true, tail: true, time: '۱۴:۴۹', text: 'خدانکنع' },
  {
    id: 8,
    mine: true,
    tail: false,
    time: '۱۴:۴۹',
    emoji: (
      <>
        <KissFace />
        <KissFace />
        <KissFace />
      </>
    ),
    emojiClass: 'pt-[21px] pb-[22px]'
  },
  { id: 9, mine: false, tail: true, time: '۱۴:۵۰', emoji: <KissMark />, emojiClass: 'py-[26px]' },
  { id: 10, mine: false, tail: false, time: '۱۴:۵۰', text: 'تو روز به روز زندگیمو روشنتر میکنی' },
  {
    id: 11,
    mine: true,
    tail: true,
    time: '۱۴:۵۰',
    emoji: (
      <>
        <GrinFace />
        <RedHeart />
      </>
    ),
    emojiClass: 'gap-[5px] py-[25px]'
  },
  {
    id: 12,
    mine: false,
    tail: true,
    time: '۱۴:۵۰',
    text: 'شبا با نگاه به عکست چشامو میبندم و صبح هم به عشق تو وا میکنم',
    meta: 'over'
  },
  {
    id: 13,
    mine: false,
    tail: false,
    time: '۱۴:۵۱',
    text: 'تا تو اومدی توی قلبم فهمیدم زندکی ارزش داره بابا',
    meta: 'below'
  }
];

const Tail = ({ mine }: { mine: boolean }) => (
  <svg
    className={clsx('absolute top-0 h-[30px] w-5', mine ? '-left-[19px] text-[#06453e]' : '-right-[19px] text-[#222d35]')}
    viewBox="0 0 20 30"
    fill="currentColor"
    aria-hidden="true"
  >
    {mine ? <path d="M20 0H5Q-1 0 1 5L20 30Z" /> : <path d="M0 0H15Q21 0 19 5L0 30Z" />}
  </svg>
);

const Ticks = () => (
  <svg className="h-[28px] w-[41px]" viewBox="0 0 41 28" fill="none" stroke="#3cb1e3" strokeWidth="4" role="img" aria-label="خوانده شد">
    <path d="M1 16L10 25L27 2M18 22L22 26L39 2" />
  </svg>
);

const Bubble = ({ message }: { message: Message }) => {
  const { mine, tail, time, text, emoji, emojiClass, meta = 'inline' } = message;

  return (
    <li
      className={clsx(
        'relative flex rounded-[17px] shadow-[0_1px_2px_rgba(0,0,0,0.35)]',
        mine ? 'self-end bg-[#06453e]' : 'self-start bg-[#222d35]',
        tail ? 'mx-0.5 not-first:mt-[17px]' : 'pr-0.5',
        mine && (tail ? 'pl-[21px]' : 'pl-[23px]'),
        !mine && (tail ? 'pl-[18px]' : 'pl-[21px]'),
        tail && (mine ? 'rounded-tl-none' : 'rounded-tr-none'),
        meta === 'below' && 'flex-col',
        meta === 'over' && 'max-w-[875px]'
      )}
    >
      {tail && <Tail mine={mine} />}
      {text && (
        <p
          className={clsx(
            'pr-6 text-[46px] leading-[62px]',
            mine ? 'text-[#d6ebe5]' : 'text-[#d9dcde]',
            meta === 'below' ? 'pt-2.5 pl-1' : 'pt-2.5',
            meta !== 'below' && (tail ? 'pb-3' : 'pb-[13px]')
          )}
        >
          {text}
        </p>
      )}
      {emoji && <div className={clsx('flex pr-[25px]', emojiClass)}>{emoji}</div>}
      <div
        className={clsx(
          'flex items-center gap-[13px] text-[32px] leading-[36px]',
          mine ? 'text-[#a6c3bc]' : 'text-[#9ba0a4]',
          meta === 'over' && 'absolute bottom-3 left-[18px]',
          meta === 'below' && 'self-end pt-3 pb-3',
          meta === 'inline' && 'self-end pb-[13px]',
          meta === 'inline' && mine && 'pr-[22px]',
          meta === 'inline' && !mine && (emoji ? 'pr-10' : 'pr-11')
        )}
      >
        <time>{time}</time>
        {mine && <Ticks />}
      </div>
    </li>
  );
};

const App = () => {
  return (
    <main
      dir="rtl"
      lang="fa"
      className="relative h-screen overflow-hidden bg-[#091a22] font-['Noto_Naskh_Arabic_UI','Noto_Naskh_Arabic','Noto_Sans',sans-serif]"
    >
      <Wallpaper />
      <EmojiDefs />
      <ul className="relative flex flex-col gap-1 px-[45px] pt-[18px]">
        {MESSAGES.map((message) => (
          <Bubble key={message.id} message={message} />
        ))}
        <li className="relative mx-0.5 mt-[17px] h-[85px] w-[409px] self-end rounded-[17px] rounded-tl-none bg-[#06453e]">
          <Tail mine />
        </li>
      </ul>
    </main>
  );
};

export default App;
